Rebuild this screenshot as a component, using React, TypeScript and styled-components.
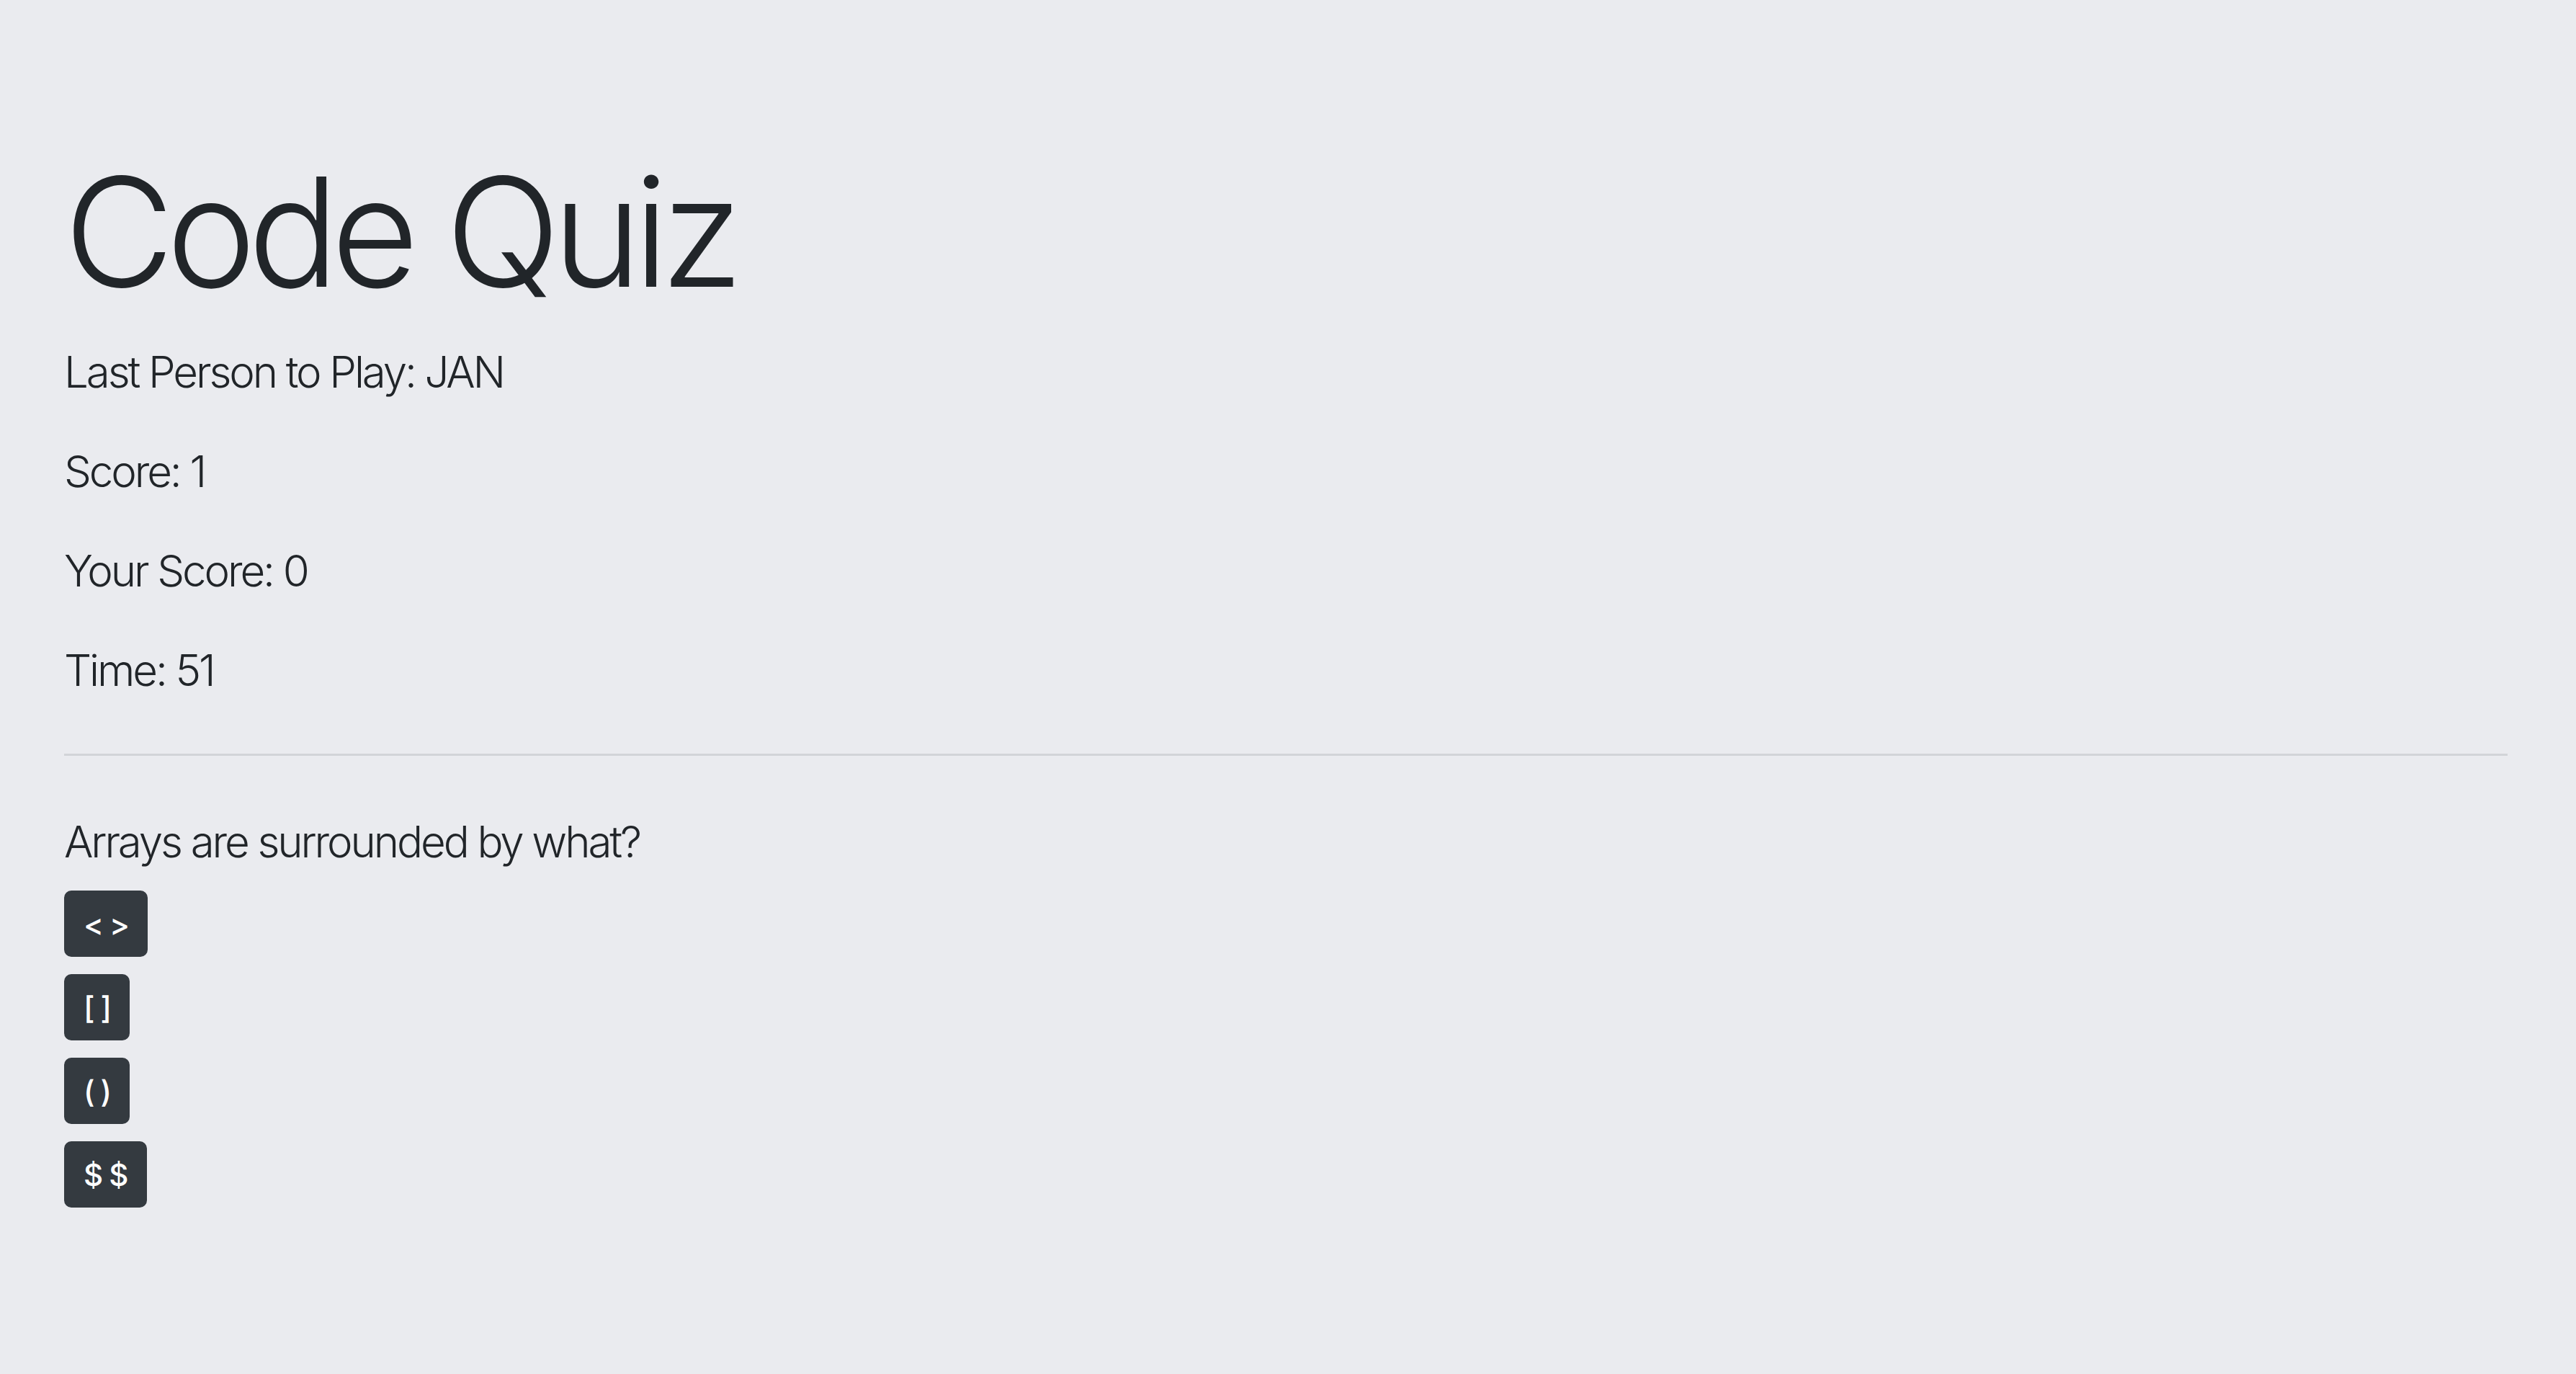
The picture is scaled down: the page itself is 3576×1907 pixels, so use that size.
import React from "react";
import styled, { createGlobalStyle } from "styled-components";

const GlobalStyle = createGlobalStyle`
  html, body {
    margin: 0;
    padding: 0;
    background: #eaebef;
  }
  body {
    font-family: Inter, "Noto Sans", "Liberation Sans", sans-serif;
    color: #212529;
  }
`;

const Jumbotron = styled.main`
  min-height: 100vh;
  box-sizing: border-box;
  padding: 196px 95px 120px 89px;
  background: #eaebef;
  display: flex;
  flex-direction: column;
`;

const Title = styled.h1`
  margin: 0 0 23px 0;
  font-size: 210px;
  font-weight: 300;
  line-height: 252px;
  letter-spacing: -11px;
  color: #212529;
`;

const Lead = styled.p<{ $gap?: number }>`
  margin: 0 0 ${(p) => (p.$gap ?? 48)}px 0;
  font-size: 60px;
  font-weight: 300;
  line-height: 90px;
  letter-spacing: -3.1px;
  color: #212529;
`;

const Divider = styled.hr`
  margin: 23px 0 74px 0;
  border: 0;
  border-top: 3px solid #d2d4d8;
  height: 0;
`;

const Answers = styled.div`
  display: flex;
  flex-direction: column;
  align-items: flex-start;
  gap: 24px;
`;

const AnswerButton = styled.button`
  box-sizing: border-box;
  height: 92px;
  padding: 0 24px;
  border: 3px solid #343a40;
  border-radius: 10px;
  background: #343a40;
  color: #ffffff;
  font-family: Inter, "Noto Sans", "Liberation Sans", sans-serif;
  font-size: 42px;
  font-weight: 500;
  line-height: 63px;
  letter-spacing: -1.6px;
  cursor: pointer;
`;

const stats = [
  "Last Person to Play: JAN",
  "Score: 1",
  "Your Score: 0",
  "Time: 51",
];

const choices = ["< >", "[ ]", "( )", "$ $"];

export default function App() {
  return (
    <>
      <GlobalStyle />
      <Jumbotron>
        <Title>Code Quiz</Title>
        {stats.map((s) => (
          <Lead key={s}>{s}</Lead>
        ))}
        <Divider />
        <Lead $gap={23}>Arrays are surrounded by what?</Lead>
        <Answers>
          {choices.map((c) => (
            <AnswerButton key={c}>{c}</AnswerButton>
          ))}
        </Answers>
      </Jumbotron>
    </>
  );
}
